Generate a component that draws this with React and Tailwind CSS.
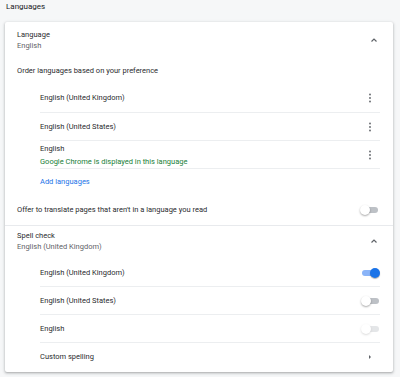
import React from "react";

const Chevron = () => (
  <svg width="8" height="6" viewBox="0 0 8 6" className="block">
    <path d="M1.5 4.5 L4 2 L6.5 4.5" fill="none" stroke="#5f6368" strokeWidth="1.2" />
  </svg>
);

const Kebab = () => (
  <svg width="4" height="10" viewBox="0 0 4 10" className="block">
    <circle cx="2" cy="1.5" r="0.9" fill="#5f6368" />
    <circle cx="2" cy="5" r="0.9" fill="#5f6368" />
    <circle cx="2" cy="8.5" r="0.9" fill="#5f6368" />
  </svg>
);

const Toggle = ({ on, disabled }) =>
  on ? (
    <div className="relative w-[19px] h-[10px]">
      <div className="absolute left-[1px] top-[2px] w-[16px] h-[6px] rounded-full bg-[#8ab4f8]" />
      <div className="absolute right-0 top-0 w-[10px] h-[10px] rounded-full bg-[#1a73e8] shadow-[0_1px_1px_rgba(0,0,0,0.3)]" />
    </div>
  ) : (
    <div className={"relative w-[19px] h-[10px] " + (disabled ? "opacity-40" : "")}>
      <div className="absolute left-[2px] top-[2px] w-[16px] h-[6px] rounded-full bg-[#bdc1c6]" />
      <div className="absolute left-0 top-0 w-[10px] h-[10px] rounded-full bg-white shadow-[0_1px_2px_rgba(0,0,0,0.35)]" />
    </div>
  );

const Row = ({ children, right, border = true, h = "h-[28px]" }) => (
  <div className={"ml-[35px] mr-[13px] flex items-center justify-between " + h + (border ? " border-b border-[#eceef0]" : "")}>
    <div className="flex flex-col">{children}</div>
    <div className="w-[20px] flex justify-center">{right}</div>
  </div>
);

export default function App() {
  return (
    <div
      className="w-[400px] h-[377px] bg-[#f6f7f8] text-[7.5px] text-[#2a2b2e] overflow-hidden"
      style={{ fontFamily: "Roboto, 'Liberation Sans', sans-serif" }}
    >
      <div className="h-[22px] pl-[6px] pb-[8px] flex items-center text-[8px] text-[#202124]">Languages</div>
      <div className="ml-[5px] w-[388px] h-[350px] bg-white rounded-[2px] shadow-[0_1px_2px_rgba(60,64,67,0.3),0_1px_3px_1px_rgba(60,64,67,0.12)]">
        <div className="h-[36px] pl-[12px] pr-[13px] flex items-center justify-between">
          <div className="flex flex-col leading-[11px]">
            <span>Language</span>
            <span className="text-[#5f6368]">English</span>
          </div>
          <div className="mr-[2px]"><Chevron /></div>
        </div>
        <div className="h-[26px] pl-[12px] flex items-center">Order languages based on your preference</div>
        <Row h="h-[29px]" right={<Kebab />}>
          <span>English (United Kingdom)</span>
        </Row>
        <Row right={<Kebab />}>
          <span>English (United States)</span>
        </Row>
        <Row right={<Kebab />}>
          <span className="leading-[13px]">English</span>
          <span className="leading-[13px] text-[#188038]">Google Chrome is displayed in this language</span>
        </Row>
        <div className="h-[26px] ml-[35px] flex items-center text-[#1a73e8]">Add languages</div>
        <div className="h-[31px] pl-[12px] pr-[14px] flex items-center justify-between border-b border-[#e8eaed]">
          <span>Offer to translate pages that aren't in a language you read</span>
          <Toggle />
        </div>
        <div className="h-[33px] pb-[4px] pl-[12px] pr-[13px] flex items-center justify-between">
          <div className="flex flex-col leading-[11px]">
            <span>Spell check</span>
            <span className="text-[#5f6368]">English (United Kingdom)</span>
          </div>
          <div className="mr-[2px]"><Chevron /></div>
        </div>
        <Row right={<Toggle on />}>
          <span>English (United Kingdom)</span>
        </Row>
        <Row right={<Toggle />}>
          <span>English (United States)</span>
        </Row>
        <Row right={<Toggle disabled />}>
          <span>English</span>
        </Row>
        <Row border={false} right={
          <svg width="4" height="6" viewBox="0 0 4 6" className="block"><path d="M1 1 L3 3 L1 5 Z" fill="#5f6368" /></svg>
        }>
          <span>Custom spelling</span>
        </Row>
      </div>
    </div>
  );
}
